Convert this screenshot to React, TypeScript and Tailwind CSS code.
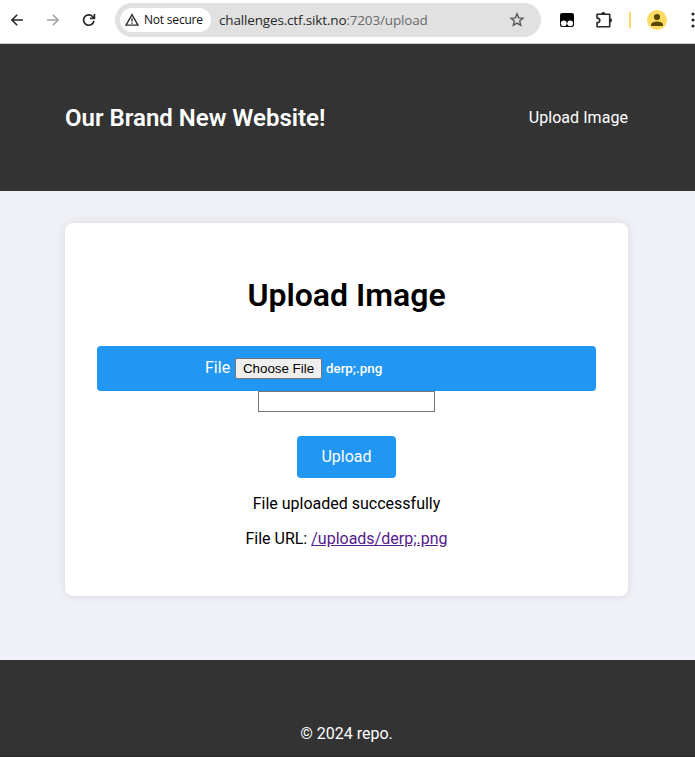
import React from "react";

function BrowserBar() {
  return (
    <div className="flex h-11 shrink-0 items-start border-b border-[#c9cccc] bg-white pt-[3px] font-['Open_Sans','Noto_Sans',sans-serif]">
      <div className="flex h-[34px] w-[115px] shrink-0 items-center">
        <svg className="ml-[9px] size-4 shrink-0" viewBox="0 0 16 16" fill="none" stroke="#27282a" strokeWidth="1.6">
          <path d="M14 8H3M8.2 2.7 2.9 8l5.3 5.3" />
        </svg>
        <svg className="ml-5 size-4 shrink-0" viewBox="0 0 16 16" fill="none" stroke="#a3a3a3" strokeWidth="1.6">
          <path d="M2 8h11M7.8 2.7 13.1 8l-5.3 5.3" />
        </svg>
        <svg className="ml-5 size-4 shrink-0" viewBox="0 0 16 16" fill="none" stroke="#27282a" strokeWidth="1.7">
          <path d="M12.9 8.8A5.2 5.2 0 1 1 11.6 4.5L12.9 5.8M13.4 2v4.4H9" />
        </svg>
      </div>
      <div className="flex h-[34px] w-[426px] shrink-0 items-center rounded-full bg-[#e1e1e1] pl-[5px]">
        <div className="flex h-6 w-[91px] shrink-0 items-center rounded-full bg-white pl-[5px]">
          <svg className="size-[14px] shrink-0" viewBox="0 0 14 14" fill="none" stroke="#303134" strokeWidth="1.4">
            <path d="M7 1.7 12.9 12.1H1.1ZM7 5.2v3.3M7 9.4v1.3" />
          </svg>
          <span className="ml-[5px] inline-block whitespace-nowrap text-[12px] leading-4 tracking-[-0.2px] font-medium text-[#101114]">Not secure</span>
        </div>
        <div className="ml-2 whitespace-nowrap text-[13.5px] leading-5 tracking-[-0.16px] text-[#27282a]">
          challenges.ctf.sikt.no<span className="text-[#686a6d]">:7203/upload</span>
        </div>
        <svg className="mr-4 ml-auto size-4" viewBox="0 0 16 16" fill="none" stroke="#57585b" strokeWidth="1.4">
          <path d="m8 1.8 1.65 4.05 4.35.35-3.3 2.85 1 4.25L8 11.05 4.3 13.3l1-4.25L2 6.2l4.35-.35Z" />
        </svg>
      </div>
      <div className="flex h-[34px] min-w-0 flex-1 items-center overflow-hidden">
        <svg className="ml-[19px] size-[14px] shrink-0" viewBox="0 0 14 14">
          <rect width="14" height="14" rx="2.2" fill="#000" />
          <circle cx="3.8" cy="10.3" r="2.9" fill="#fff" />
          <circle cx="10.2" cy="10.3" r="2.9" fill="#fff" />
        </svg>
        <svg className="ml-[21px] size-[18px] shrink-0" viewBox="0 0 18 18">
          <path d="M2 3.2h12.7V15.8H2v-3.9Q4.8 11.3 4.8 9.4T2 6.9Z" fill="none" stroke="#27282a" strokeWidth="1.6" strokeLinejoin="round" />
          <path d="M6.2 3a2.1 2.1 0 0 1 4.2 0ZM15 7.2a2.1 2.1 0 0 1 0 4.2Z" fill="#27282a" />
        </svg>
        <div className="ml-4 h-4 w-0.5 shrink-0 bg-[#fcd964]" />
        <svg className="ml-4 size-5 shrink-0" viewBox="0 0 20 20">
          <circle cx="10" cy="10" r="10" fill="#fddb5f" />
          <circle cx="10" cy="7" r="3.1" fill="#5b4600" />
          <path d="M4 16v-1.3c0-2 3.6-3.2 6-3.2s6 1.2 6 3.2V16Z" fill="#5b4600" />
        </svg>
        <svg className="ml-[24px] h-4 w-4 shrink-0" viewBox="0 0 16 16" fill="#27282a">
          <circle cx="2" cy="2" r="1.6" />
          <circle cx="2" cy="8" r="1.6" />
          <circle cx="2" cy="14" r="1.6" />
        </svg>
      </div>
    </div>
  );
}

export default function App() {
  return (
    <div className="flex h-[757px] w-[695px] flex-col overflow-hidden bg-[#f0f1f6] font-['Roboto',sans-serif] text-base leading-[19px] text-black">
      <BrowserBar />
      <header className="flex h-[147px] shrink-0 items-center justify-between bg-[#333] pr-[67px] pl-[65px] text-white">
        <h2 className="text-2xl leading-7 font-semibold">Our Brand New Website!</h2>
        <a className="cursor-pointer tracking-[0.05px]">Upload Image</a>
      </header>
      <main className="flex h-[469px] shrink-0 flex-col pt-8 pr-[67px] pl-[65px]">
        <section className="flex h-[373px] flex-col items-center rounded-lg bg-white px-8 pt-[53px] shadow-[0_0_10px_rgba(0,0,0,0.1)]">
          <h1 className="text-[32px] leading-[38px] font-semibold">Upload Image</h1>
          <form className="mt-8 flex w-full flex-col items-center" onSubmit={(e) => e.preventDefault()}>
            <div className="flex h-[45px] w-full rounded bg-[#2196f3] pt-3 pl-[108px] text-white">
              <label className="w-[26px] leading-[19px]">File</label>
              <button type="button" className="ml-1 h-[21px] w-[87px] shrink-0 rounded-[2px] border border-[#767676] bg-[#efefef] font-['Liberation_Sans',sans-serif] text-[13.333px] leading-[19px] whitespace-nowrap text-black">Choose File</button>
              <span className="ml-1 text-[13.333px] leading-[21px] font-medium">derp;.png</span>
            </div>
            <input type="text" className="h-[21px] w-[177px] border border-[#767676] bg-white outline-none" />
            <button type="submit" className="mt-6 h-[42px] w-[99px] rounded bg-[#2196f3] pb-0.5 leading-[19px] text-white">Upload</button>
          </form>
          <p className="mt-4">File uploaded successfully</p>
          <p className="mt-4">File URL: <a className="cursor-pointer text-[#551a8b] underline">/uploads/derp;.png</a></p>
        </section>
      </main>
      <footer className="flex h-[97px] shrink-0 justify-center border-b border-[#292929] bg-[#333] pt-16 pr-0.5 text-white">
        <p>© 2024 repo.</p>
      </footer>
    </div>
  );
}
